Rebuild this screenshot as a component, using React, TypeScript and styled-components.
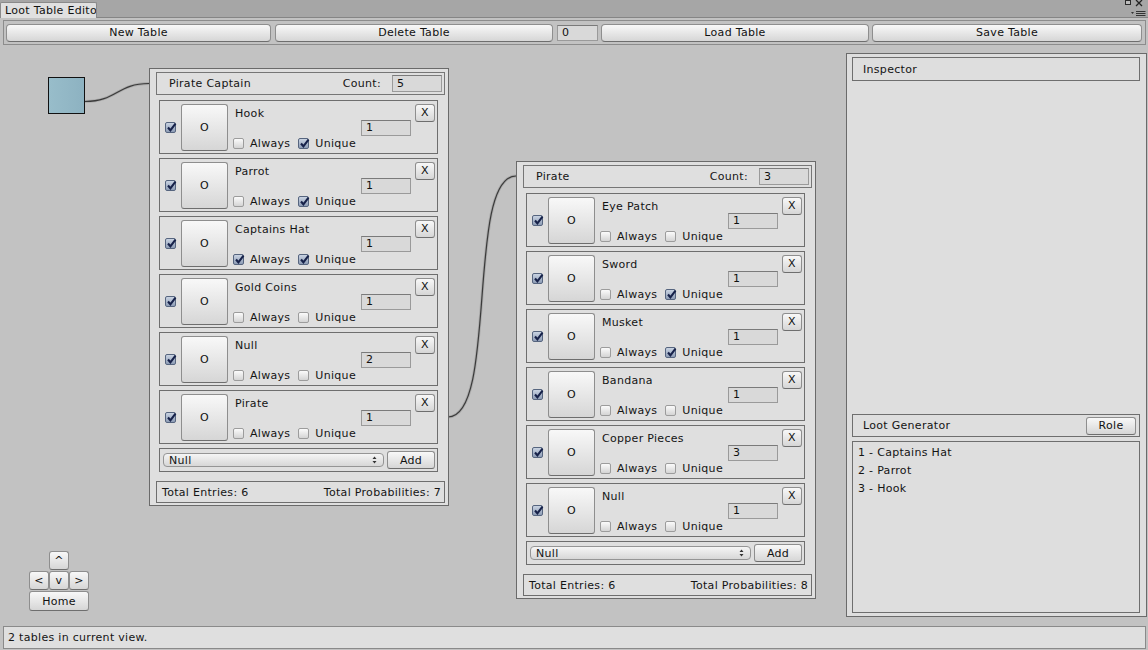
import React from "react";
import styled, { createGlobalStyle } from "styled-components";

const GlobalStyle = createGlobalStyle`
  html, body { margin: 0; padding: 0; }
  body {
    width: 1148px; height: 650px; overflow: hidden; background: #c2c2c2;
    font-family: "DejaVu Sans", Verdana, sans-serif; font-size: 11px; color: #141414;
    letter-spacing: 0.3px;
  }
  * { box-sizing: border-box; }
`;

const Window = styled.div`
  width: 1148px;
  height: 650px;
  display: flex;
  flex-direction: column;
  background: #c2c2c2;
`;

const TabBar = styled.div`
  position: relative;
  height: 18px;
  flex: none;
  background: #a6a6a6;
  border-bottom: 1px solid #858585;
  display: flex;
  align-items: flex-end;
`;

const Tab = styled.div`
  width: 97px;
  height: 16px;
  margin-bottom: -1px;
  background: #e0e0e0;
  border: 1px solid #8a8a8a;
  border-bottom: none;
  border-radius: 2px 2px 0 0;
  padding-left: 4px;
  line-height: 15px;
  white-space: nowrap;
  overflow: hidden;
  color: #111;
`;

const WinControls = styled.svg`
  position: absolute;
  right: 0;
  top: 0;
`;

const Toolbar = styled.div`
  height: 28px;
  flex: none;
  padding: 2px 2px 1px 3px;
`;

const ToolbarBox = styled.div`
  height: 25px;
  border: 1px solid #8c8c8c;
  padding: 0 2px;
  display: flex;
  align-items: center;
`;

const Btn = styled.button<{ $w?: number; $h?: number; $r?: number }>`
  ${(p) => (p.$w ? `width: ${p.$w}px; flex: none;` : "")}
  height: ${(p) => p.$h ?? 18}px;
  margin: 0;
  padding: 0;
  font-family: "DejaVu Sans", Verdana, sans-serif;
  font-size: 11px;
  letter-spacing: 0.3px;
  color: #111;
  background: linear-gradient(#f8f8f8, #d6d6d6);
  border: 1px solid #8e8e8e;
  border-bottom-color: #6e6e6e;
  border-radius: ${(p) => p.$r ?? 3}px;
  display: flex;
  align-items: center;
  justify-content: center;
  line-height: 1;
`;

const ToolBtn = styled(Btn)<{ $gap: number }>`
  border-radius: 4px;
  margin-right: ${(p) => p.$gap}px;
`;

const Field = styled.div<{ $w: number; $h?: number; $gap?: number }>`
  width: ${(p) => p.$w}px;
  height: ${(p) => p.$h ?? 16}px;
  flex: none;
  margin-right: ${(p) => p.$gap ?? 0}px;
  background: #d9d9d9;
  border: 1px solid #9a9a9a;
  border-top-color: #7a7a7a;
  padding-left: 4px;
  display: flex;
  align-items: center;
  color: #111;
`;

const Main = styled.div`
  flex: 1;
  display: flex;
  min-height: 0;
`;

const Canvas = styled.div`
  position: relative;
  flex: 1;
  overflow: hidden;
`;

const Wires = styled.svg`
  position: absolute;
  left: 0;
  top: 0;
`;

const RootBlock = styled.div`
  position: absolute;
  left: 48px;
  top: 31px;
  width: 37px;
  height: 37px;
  border: 1px solid #111;
  background: linear-gradient(90deg, #98bdca, #8db2c1);
`;

const Node = styled.div<{ $x: number; $y: number }>`
  position: absolute;
  left: ${(p) => p.$x}px;
  top: ${(p) => p.$y}px;
  width: 300px;
  background: #dfdfdf;
  border: 1px solid #6a6a6a;
  padding: 3px 3px 2px 6px;
  display: flex;
  flex-direction: column;
`;

const NodeHeader = styled.div`
  height: 23px;
  border: 1px solid #767676;
  display: flex;
  align-items: center;
  padding: 0 2px 0 12px;
  margin-bottom: 5px;
`;

const Grow = styled.div`
  flex: 1;
`;

const CountLabel = styled.span`
  margin-right: 11px;
`;

const Entries = styled.div`
  display: flex;
  flex-direction: column;
  gap: 4px;
  margin: 0 7px 0 3px;
`;

const Entry = styled.div`
  height: 54px;
  border: 1px solid #6e6e6e;
  display: flex;
  align-items: center;
  padding: 0 2px 0 5px;
`;

const Box = styled.span<{ $on: boolean }>`
  width: 11px;
  height: 11px;
  flex: none;
  border-radius: 2px;
  border: 1px solid ${(p) => (p.$on ? "#56657f" : "#9c9c9c")};
  background: ${(p) =>
    p.$on ? "linear-gradient(#c9d3e2, #8e9db6)" : "linear-gradient(#fbfbfb, #d4d4d4)"};
  position: relative;
  display: inline-block;
`;

const Tick = styled.svg`
  position: absolute;
  left: -1px;
  top: -2px;
`;

const BigBtn = styled(Btn)`
  width: 47px;
  height: 47px;
  flex: none;
  margin: 0 5px;
  border-radius: 3px;
`;

const EntryBody = styled.div`
  flex: 1;
  height: 47px;
  display: grid;
  grid-template-columns: 1fr 50px 20px;
  grid-template-rows: 16px 16px 15px;
  column-gap: 4px;
`;

const EntryName = styled.div`
  grid-column: 1;
  grid-row: 1;
  padding: 3px 0 0 2px;
  white-space: nowrap;
`;

const EntryField = styled(Field)`
  grid-column: 2;
  grid-row: 2;
`;

const XBtn = styled(Btn)`
  grid-column: 3;
  grid-row: 1 / span 2;
  align-self: start;
  width: 20px;
`;

const Checks = styled.div`
  grid-column: 1 / span 2;
  grid-row: 3;
  display: flex;
  align-items: center;
  align-self: center;
`;

const CheckLabel = styled.span`
  margin: 0 8px 0 6px;
`;

const AddRow = styled.div`
  height: 24px;
  margin: 4px 7px 0 3px;
  border: 1px solid #6e6e6e;
  display: flex;
  align-items: center;
  gap: 3px;
  padding: 0 2px 0 3px;
`;

const Popup = styled.div`
  flex: 1;
  height: 14px;
  border: 1px solid #959595;
  border-radius: 4px;
  background: linear-gradient(#f5f5f5, #d7d7d7);
  display: flex;
  align-items: center;
  padding: 0 6px 0 5px;
  font-size: 11px;
`;

const Footer = styled.div`
  height: 22px;
  margin-top: 9px;
  border: 1px solid #6e6e6e;
  display: flex;
  align-items: center;
  justify-content: space-between;
  padding: 0 3px 0 5px;
`;

const Nav = styled.div`
  position: absolute;
  left: 29px;
  top: 505px;
  display: grid;
  grid-template-columns: repeat(3, 20px);
  grid-template-rows: 19px 19px 20px;
  row-gap: 1px;
`;

const NavBtn = styled(Btn)<{ $col?: string }>`
  grid-column: ${(p) => p.$col ?? "auto"};
  height: 100%;
  width: 100%;
`;

const Inspector = styled.div`
  width: 301px;
  flex: none;
  margin: 7px 1px 7px 0;
  border: 1px solid #6a6a6a;
  background: #dedede;
  padding: 3px 6px 3px 5px;
  display: flex;
  flex-direction: column;
`;

const PanelHeader = styled.div<{ $h: number }>`
  height: ${(p) => p.$h}px;
  flex: none;
  border: 1px solid #6e6e6e;
  display: flex;
  align-items: center;
  justify-content: space-between;
  padding: 0 3px 0 10px;
`;

const LootList = styled.div`
  height: 172px;
  flex: none;
  margin-top: 4px;
  border: 1px solid #6e6e6e;
  padding: 2px 5px;
`;

const LootItem = styled.div`
  line-height: 18px;
`;

const StatusBar = styled.div`
  height: 23px;
  flex: none;
  margin: 2px 2px 1px 3px;
  border: 1px solid #8a8a8a;
  background: #dfdfdf;
  padding-left: 4px;
  display: flex;
  align-items: center;
`;

type Item = { name: string; always: boolean; unique: boolean; value: number };

const Check = ({ on }: { on: boolean }) => (
  <Box $on={on}>
    {on && (
      <Tick width="13" height="13" viewBox="0 0 13 13">
        <path d="M3 6.5 L5.4 9.3 L10.5 2.6" fill="none" stroke="#17224a" strokeWidth="2.1" strokeLinejoin="miter" />
      </Tick>
    )}
  </Box>
);

const PopArrow = () => (
  <svg width="5" height="8" viewBox="0 0 5 8">
    <path d="M0.5 3 L2.5 0.5 L4.5 3 Z M0.5 5 L2.5 7.5 L4.5 5 Z" fill="#333" />
  </svg>
);

const TableNode = ({
  x, y, title, count, items, total,
}: { x: number; y: number; title: string; count: number; items: Item[]; total: number }) => (
  <Node $x={x} $y={y}>
    <NodeHeader>
      <Grow>{title}</Grow>
      <CountLabel>Count:</CountLabel>
      <Field $w={50} $h={17}>{count}</Field>
    </NodeHeader>
    <Entries>
      {items.map((it, i) => (
        <Entry key={i}>
          <Check on={true} />
          <BigBtn>O</BigBtn>
          <EntryBody>
            <EntryName>{it.name}</EntryName>
            <EntryField $w={50}>{it.value}</EntryField>
            <XBtn>X</XBtn>
            <Checks>
              <Check on={it.always} />
              <CheckLabel>Always</CheckLabel>
              <Check on={it.unique} />
              <CheckLabel>Unique</CheckLabel>
            </Checks>
          </EntryBody>
        </Entry>
      ))}
    </Entries>
    <AddRow>
      <Popup>
        <Grow>Null</Grow>
        <PopArrow />
      </Popup>
      <Btn $w={48} $h={18}>Add</Btn>
    </AddRow>
    <Footer>
      <span>Total Entries: {items.length}</span>
      <span>Total Probabilities: {total}</span>
    </Footer>
  </Node>
);

const captain: Item[] = [
  { name: "Hook", always: false, unique: true, value: 1 },
  { name: "Parrot", always: false, unique: true, value: 1 },
  { name: "Captains Hat", always: true, unique: true, value: 1 },
  { name: "Gold Coins", always: false, unique: false, value: 1 },
  { name: "Null", always: false, unique: false, value: 2 },
  { name: "Pirate", always: false, unique: false, value: 1 },
];

const pirate: Item[] = [
  { name: "Eye Patch", always: false, unique: false, value: 1 },
  { name: "Sword", always: false, unique: true, value: 1 },
  { name: "Musket", always: false, unique: true, value: 1 },
  { name: "Bandana", always: false, unique: false, value: 1 },
  { name: "Copper Pieces", always: false, unique: false, value: 3 },
  { name: "Null", always: false, unique: false, value: 1 },
];

export default function App() {
  return (
    <>
      <GlobalStyle />
      <Window>
        <TabBar>
          <Tab>Loot Table Editor</Tab>
          <WinControls width="26" height="17" viewBox="0 0 26 17">
            <rect x="3" y="-1" width="6" height="6" fill="#2a2a2a" />
            <rect x="4" y="1" width="4" height="3" fill="#bcbcbc" />
            <path d="M14 0 L20 6 M20 0 L14 6" stroke="#222" strokeWidth="1.3" />
            <path d="M9 12 L12 12 L10.5 14 Z" fill="#333" />
            <path d="M14 11.5 H23.5 M14 13.5 H23.5 M14 15.5 H23.5" stroke="#333" strokeWidth="1" />
          </WinControls>
        </TabBar>
        <Toolbar>
          <ToolbarBox>
            <ToolBtn $w={265} $gap={4}>New Table</ToolBtn>
            <ToolBtn $w={278} $gap={4}>Delete Table</ToolBtn>
            <Field $w={41} $gap={3}>0</Field>
            <ToolBtn $w={268} $gap={3}>Load Table</ToolBtn>
            <ToolBtn $w={270} $gap={0}>Save Table</ToolBtn>
          </ToolbarBox>
        </Toolbar>
        <Main>
          <Canvas>
            <Wires width="846" height="578" viewBox="0 0 846 578">
              <g fill="none">
                <path d="M85 55.5 C117 55.5, 117 37.5, 149 37.5" stroke="rgba(0,0,0,0.12)" strokeWidth="3" />
                <path d="M85 55.5 C117 55.5, 117 37.5, 149 37.5" stroke="#3a3a3a" strokeWidth="1.2" />
                <path d="M448 371 C498 371, 466 130, 516 130" stroke="rgba(0,0,0,0.12)" strokeWidth="3" />
                <path d="M448 371 C498 371, 466 130, 516 130" stroke="#3a3a3a" strokeWidth="1.2" />
              </g>
            </Wires>
            <RootBlock />
            <TableNode x={149} y={22} title="Pirate Captain" count={5} items={captain} total={7} />
            <TableNode x={516} y={115} title="Pirate" count={3} items={pirate} total={8} />
            <Nav>
              <NavBtn $col="2">^</NavBtn>
              <NavBtn $col="1">&lt;</NavBtn>
              <NavBtn $col="2">v</NavBtn>
              <NavBtn $col="3">&gt;</NavBtn>
              <NavBtn $col="1 / span 3">Home</NavBtn>
            </Nav>
          </Canvas>
          <Inspector>
            <PanelHeader $h={24}>Inspector</PanelHeader>
            <Grow />
            <PanelHeader $h={23}>
              <span>Loot Generator</span>
              <Btn $w={50} $h={18}>Role</Btn>
            </PanelHeader>
            <LootList>
              <LootItem>1 - Captains Hat</LootItem>
              <LootItem>2 - Parrot</LootItem>
              <LootItem>3 - Hook</LootItem>
            </LootList>
          </Inspector>
        </Main>
        <StatusBar>2 tables in current view.</StatusBar>
      </Window>
    </>
  );
}
